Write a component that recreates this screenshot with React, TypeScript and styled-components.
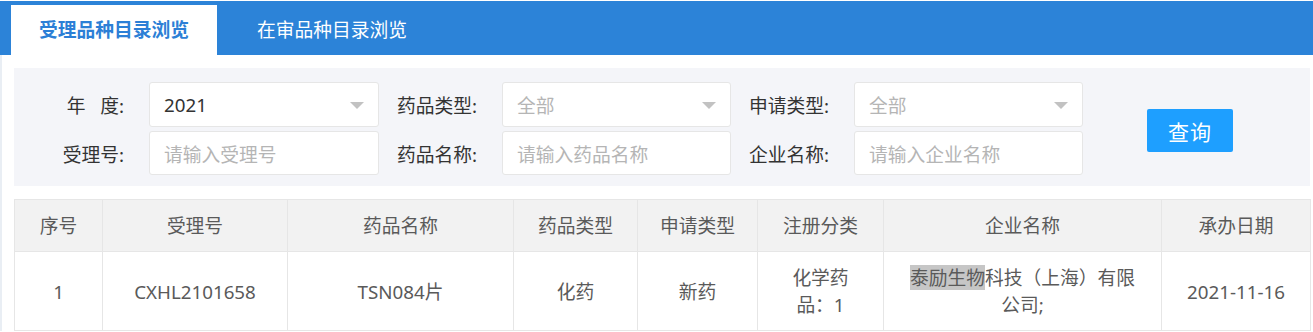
import { Fragment } from 'react';
import styled, { createGlobalStyle } from 'styled-components';

const GlobalStyle = createGlobalStyle`
  body {
    margin: 0;
    background: #fff;
    font-family: "Noto Sans", "Noto Sans CJK SC", sans-serif;
  }
`;

const Page = styled.div`
  width: 1313px;
  padding-top: 1px;
  font-size: 18.75px;
`;

const TabBar = styled.div`
  display: flex;
  height: 50px;
  padding: 4px 0 0 11px;
  background: #2c83d8;
`;

const Tab = styled.div<{ $active?: boolean }>`
  display: flex;
  align-items: center;
  padding: 0 28px;
  margin-right: 12px;
  background: ${(p) => (p.$active ? '#fff' : 'transparent')};
  color: ${(p) => (p.$active ? '#2c7fd6' : '#fff')};
  font-weight: ${(p) => (p.$active ? 700 : 400)};
  line-height: 1;
`;

const Content = styled.div`
  border-left: 2px solid #e9eef4;
  padding: 13px 3px 0 12px;
`;

const Filter = styled.div`
  display: flex;
  align-items: center;
  background: #f4f5f9;
  padding: 14px 0 11px 12px;
`;

const FormGrid = styled.div`
  display: grid;
  grid-template-columns: 123px 230px 123px 229px 123px 229px;
  grid-template-rows: 45px 44px;
  row-gap: 4px;
`;

const Label = styled.label`
  display: flex;
  align-items: center;
  justify-content: flex-end;
  padding-right: 25px;
  color: #333;
  white-space: pre;
`;

const Field = styled.div<{ $placeholder?: boolean }>`
  position: relative;
  display: flex;
  align-items: center;
  box-sizing: border-box;
  padding-left: 14px;
  background: #fff;
  border: 1px solid #e6e6e6;
  border-radius: 3px;
  color: ${(p) => (p.$placeholder ? '#b5b5b5' : '#333')};
`;

const Caret = styled.span`
  position: absolute;
  right: 14px;
  top: 50%;
  margin-top: -3px;
  width: 0;
  height: 0;
  border-left: 7px solid transparent;
  border-right: 7px solid transparent;
  border-top: 7px solid #c2c2c2;
`;

const SearchButton = styled.button`
  margin: 4px 0 0 64px;
  width: 86px;
  height: 43px;
  border: none;
  border-radius: 2px;
  background: #1e9fff;
  color: #fff;
  font-family: inherit;
  font-size: 21px;
  letter-spacing: 1px;
`;

const Table = styled.table`
  margin-top: 13px;
  width: 1296px;
  border-collapse: collapse;
  table-layout: fixed;
  color: #5a5a5a;
  font-size: 18.75px;

  th,
  td {
    border: 1px solid #e6e6e6;
    text-align: center;
    padding: 0;
    line-height: 27px;
  }
  th {
    height: 51px;
    background: #f2f2f2;
    font-weight: 400;
  }
  td {
    height: 78px;
  }
`;

const Mark = styled.span`
  background: #c6c6c6;
`;

const columns: [string, number][] = [
  ['序号', 88],
  ['受理号', 185],
  ['药品名称', 226],
  ['药品类型', 124],
  ['申请类型', 120],
  ['注册分类', 126],
  ['企业名称', 278],
  ['承办日期', 149],
];

const fields = [
  { label: '年\u00a0\u00a0\u00a0度:', value: '2021', select: true },
  { label: '药品类型:', value: '全部', select: true, placeholder: true },
  { label: '申请类型:', value: '全部', select: true, placeholder: true },
  { label: '受理号:', value: '请输入受理号', placeholder: true },
  { label: '药品名称:', value: '请输入药品名称', placeholder: true },
  { label: '企业名称:', value: '请输入企业名称', placeholder: true },
];

const App = () => {
  return (
    <Page>
      <GlobalStyle />
      <TabBar>
        <Tab $active>受理品种目录浏览</Tab>
        <Tab>在审品种目录浏览</Tab>
      </TabBar>
      <Content>
        <Filter>
          <FormGrid>
            {fields.map((f) => (
              <Fragment key={f.label}>
                <Label>{f.label}</Label>
                <Field $placeholder={f.placeholder}>
                  {f.value}
                  {f.select && <Caret />}
                </Field>
              </Fragment>
            ))}
          </FormGrid>
          <SearchButton>查询</SearchButton>
        </Filter>
        <Table>
          <colgroup>
            {columns.map(([name, w]) => (
              <col key={name} style={{ width: w }} />
            ))}
          </colgroup>
          <thead>
            <tr>
              {columns.map(([name]) => (
                <th key={name}>{name}</th>
              ))}
            </tr>
          </thead>
          <tbody>
            <tr>
              <td>1</td>
              <td>CXHL2101658</td>
              <td>TSN084片</td>
              <td>化药</td>
              <td>新药</td>
              <td>
                化学药
                <br />
                品：1
              </td>
              <td>
                <Mark>泰励生物</Mark>科技（上海）有限
                <br />
                公司;
              </td>
              <td>2021-11-16</td>
            </tr>
          </tbody>
        </Table>
      </Content>
    </Page>
  );
};

export default App;
